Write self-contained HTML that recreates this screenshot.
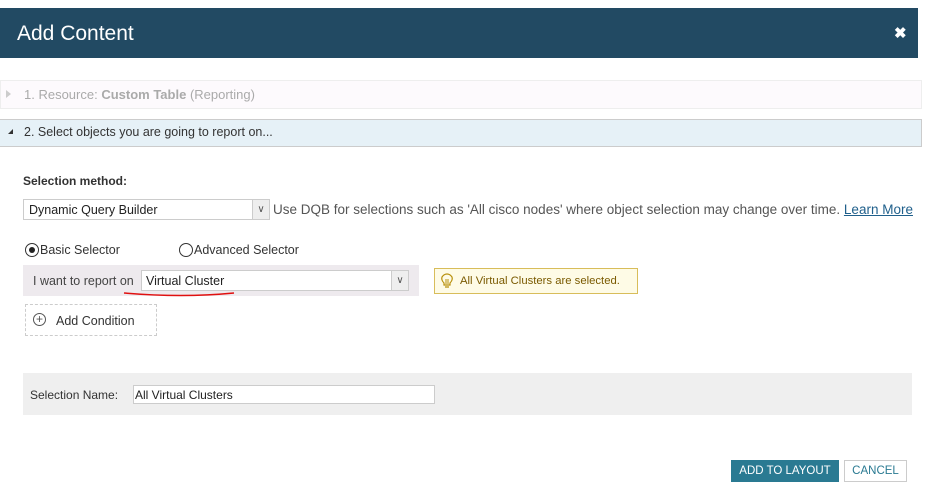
<!DOCTYPE html>
<html><head><style>
*{box-sizing:border-box;margin:0;padding:0}
body{width:930px;height:504px;background:#fff;font-family:"Liberation Sans",sans-serif;position:relative;overflow:hidden;color:#222}
.a{position:absolute}
</style></head><body>
<div class="a" style="left:0;top:8px;width:918px;height:50px;background:#224a63"></div>
<div class="a" style="left:17px;top:22px;font-size:21px;color:#fff">Add Content</div>
<div class="a" style="left:894px;top:24px;font-size:15px;color:#fff;font-weight:bold">✖</div>

<div class="a" style="left:0;top:80px;width:922px;height:29px;background:#fdfafd;border:1px solid #eee"></div>
<div class="a" style="left:6px;top:90px;width:0;height:0;border-left:5px solid #ccc;border-top:4px solid transparent;border-bottom:4px solid transparent"></div>
<div class="a" style="left:24px;top:87px;font-size:13px;color:#aaa">1. Resource: <b style="color:#aaa">Custom Table</b> (Reporting)</div>

<div class="a" style="left:0;top:119px;width:922px;height:28px;background:#e6f1f7;border-top:1px solid #ccc;border-bottom:1px solid #ccc;border-right:1px solid #ccc"></div>
<div class="a" style="left:8px;top:129px;width:0;height:0;border-right:5px solid #333;border-top:5px solid transparent"></div>
<div class="a" style="left:24px;top:125px;font-size:12.5px;color:#333">2. Select objects you are going to report on...</div>

<div class="a" style="left:23px;top:174px;font-size:12px;font-weight:bold;color:#333">Selection method:</div>
<div class="a" style="left:23px;top:199px;width:247px;height:21px;border:1px solid #ccc"></div>
<div class="a" style="left:29px;top:203px;font-size:12.5px">Dynamic Query Builder</div>
<div class="a" style="left:252px;top:200px;width:17px;height:19px;border-left:1px solid #ccc;background:#eee;font-size:10px;text-align:center;line-height:19px;color:#555">∨</div>
<div class="a" style="left:273px;top:202px;font-size:13.5px;color:#555;white-space:nowrap">Use DQB for selections such as 'All cisco nodes' where object selection may change over time. <span style="color:#1f5f8b;text-decoration:underline">Learn More</span></div>

<div class="a" style="left:25px;top:243px;width:14px;height:14px;border:1px solid #333;border-radius:50%"></div>
<div class="a" style="left:29px;top:247px;width:6px;height:6px;background:#222;border-radius:50%"></div>
<div class="a" style="left:40px;top:243px;font-size:12.5px;color:#333">Basic Selector</div>
<div class="a" style="left:179px;top:243px;width:14px;height:14px;border:1px solid #333;border-radius:50%"></div>
<div class="a" style="left:194px;top:243px;font-size:12.5px;color:#333">Advanced Selector</div>

<div class="a" style="left:23px;top:265px;width:396px;height:31px;background:#eeeaee"></div>
<div class="a" style="left:33px;top:274px;font-size:12.5px;color:#444">I want to report on</div>
<div class="a" style="left:141px;top:270px;width:268px;height:21px;background:#fff;border:1px solid #ccc"></div>
<div class="a" style="left:146px;top:274px;font-size:12.5px">Virtual Cluster</div>
<div class="a" style="left:391px;top:271px;width:17px;height:19px;border-left:1px solid #ccc;background:#eee;font-size:10px;text-align:center;line-height:19px;color:#555">∨</div>
<svg class="a" style="left:122px;top:290px" width="115" height="8"><path d="M2 3 Q60 8 112 3" stroke="#e01010" stroke-width="1.5" fill="none"/></svg>

<div class="a" style="left:434px;top:268px;width:204px;height:26px;background:#fefbe6;border:1px solid #d8bd5a"></div>
<svg class="a" style="left:440px;top:273px" width="14" height="16"><path d="M4 10 Q1 7 2 4 Q4 1 7 1 Q10 1 12 4 Q13 7 10 10 L10 12 L4 12Z M5 14 L9 14" stroke="#b8900b" stroke-width="1.2" fill="none"/><path d="M6 11 L6 6 M8 11 L8 6" stroke="#b8900b" stroke-width="1"/></svg>
<div class="a" style="left:460px;top:275px;font-size:11.3px;color:#7a5a00">All Virtual Clusters are selected.</div>

<div class="a" style="left:25px;top:304px;width:132px;height:32px;border:1px dashed #ccc"></div>
<div class="a" style="left:33px;top:313px;width:13px;height:13px;border:1px solid #555;border-radius:50%;font-size:12px;line-height:10px;text-align:center;color:#555">+</div>
<div class="a" style="left:56px;top:314px;font-size:12.5px;color:#333">Add Condition</div>

<div class="a" style="left:23px;top:373px;width:889px;height:42px;background:#efefef"></div>
<div class="a" style="left:30px;top:388px;font-size:12px;color:#333">Selection Name:</div>
<div class="a" style="left:133px;top:385px;width:302px;height:19px;background:#fff;border:1px solid #ccc"></div>
<div class="a" style="left:135px;top:388px;font-size:12px">All Virtual Clusters</div>

<div class="a" style="left:731px;top:460px;width:108px;height:22px;background:#2a7a92;color:#fff;font-size:11.5px;text-align:center;line-height:22px">ADD TO LAYOUT</div>
<div class="a" style="left:844px;top:460px;width:63px;height:22px;border:1px solid #ccc;color:#2a7a92;font-size:11.5px;text-align:center;line-height:20px">CANCEL</div>
</body></html>
